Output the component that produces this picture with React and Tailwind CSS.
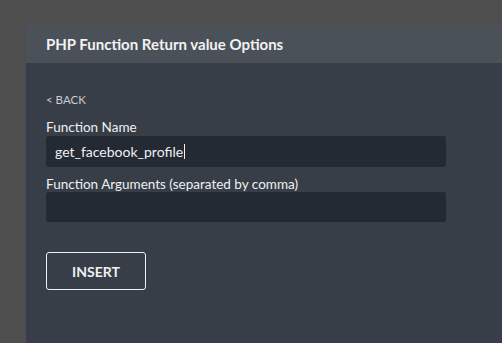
export default function App() {
  return (
    <div className="h-[343px] w-[502px] overflow-hidden bg-[#4e4e4e] pl-[26px] pt-[25px] font-['Lato',sans-serif]">
      <div className="flex h-full flex-col bg-[#373e47]">
        {/* Header */}
        <div className="flex h-[38px] items-center bg-[#4a5159] px-5">
          <h2 className="text-[15px] font-bold text-[#f2f2f2]">PHP Function Return value Options</h2>
        </div>

        {/* Body */}
        <div className="flex flex-col px-5 pt-[29px]">
          <button className="self-start text-[11.5px] leading-[16px] text-[#c9ccd0]">&lt; BACK</button>

          <label className="mt-[11px] text-[13.5px] leading-[16px] text-[#eef0f2]">Function Name</label>
          <div className="mt-px flex h-[31px] w-[400px] items-center rounded-[3px] bg-[#242a33] px-[9px]">
            <span className="text-[14px] text-[#eef0f2]">get_facebook_profile</span>
            <span className="ml-px h-[15px] w-px bg-[#eef0f2]" />
          </div>

          <label className="mt-[9px] text-[13.5px] leading-[16px] text-[#eef0f2]">Function Arguments (separated by comma)</label>
          <div className="h-[30px] w-[400px] rounded-[3px] bg-[#242a33]" />

          <button className="mt-[30px] flex h-[38px] w-[100px] items-center justify-center rounded-[3px] border border-[#f0f0f0] text-[14px] font-bold text-[#f0f0f0]">
            INSERT
          </button>
        </div>
      </div>
    </div>
  );
}
